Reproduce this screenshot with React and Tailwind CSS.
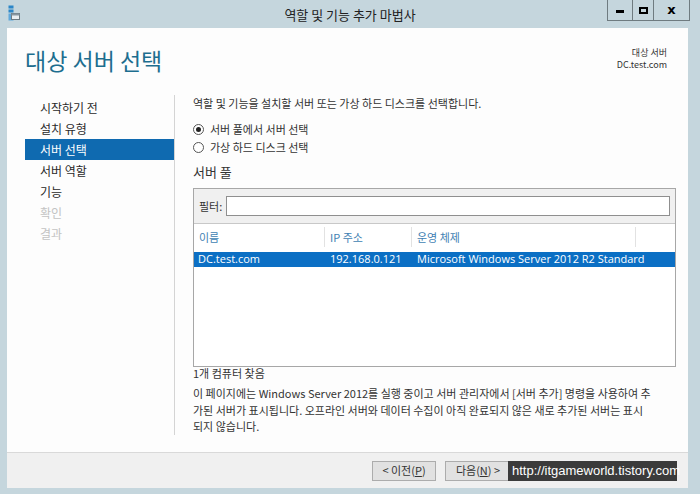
import { useState } from "react";

const font = { fontFamily: '"Noto Sans CJK KR", "Noto Sans", sans-serif' };

const steps = [
  { label: "시작하기 전", state: "done" },
  { label: "설치 유형", state: "done" },
  { label: "서버 선택", state: "active" },
  { label: "서버 역할", state: "done" },
  { label: "기능", state: "done" },
  { label: "확인", state: "disabled" },
  { label: "결과", state: "disabled" },
];

function AppIcon() {
  return (
    <svg width="12" height="16" viewBox="0 0 12 16">
      <rect x="0.5" y="0.5" width="5" height="3" fill="#2b86c8" />
      <rect x="0.5" y="4.5" width="5" height="3" fill="#2b86c8" />
      <rect x="0.5" y="8.5" width="5" height="7" fill="#5fa8dc" />
      <rect x="3.5" y="8.5" width="8" height="6" fill="#e9eef1" stroke="#6b7a82" />
      <rect x="3.5" y="8.5" width="8" height="2" fill="#8796a0" />
    </svg>
  );
}

function Radio({ checked, label }) {
  return (
    <div className="flex items-center h-[18px]">
      <span className="w-[11px] h-[11px] rounded-full border border-[#555] bg-white flex items-center justify-center mr-[6px]">
        {checked && <span className="w-[5px] h-[5px] rounded-full bg-[#222]" />}
      </span>
      <span>{label}</span>
    </div>
  );
}

export default function App() {
  const [selected] = useState(0);

  return (
    <div className="w-[700px] h-[494px] bg-[#c5d6dd] flex flex-col text-[12px] text-[#1e1e1e]" style={font}>
      {/* title bar */}
      <div className="h-[28px] flex items-start relative">
        <div className="pl-[8px] pt-[5px]">
          <AppIcon />
        </div>
        <div className="absolute left-0 right-0 top-[5px] text-center text-[13px] text-[#222]">
          역할 및 기능 추가 마법사
        </div>
        <div className="ml-auto mr-[10px] flex h-[21px] border border-t-0 border-[#6f7b80]">
          <div className="w-[25px] flex items-center justify-center border-r border-[#6f7b80]">
            <span className="w-[8px] h-[3px] bg-black mt-[3px]" />
          </div>
          <div className="w-[21px] flex items-center justify-center border-r border-[#6f7b80]">
            <span className="w-[9px] h-[7px] border-2 border-black" />
          </div>
          <div className="w-[35px] flex items-center justify-center text-[13px] font-bold text-black" style={{ fontFamily: '"DejaVu Sans", sans-serif' }}>
            x
          </div>
        </div>
      </div>

      {/* body */}
      <div className="flex-1 flex flex-col ml-[7px] mr-[12px] mb-[6px]">
        <div className="flex-1 bg-[#fdfdfd] flex flex-col pl-[18px] pr-[12px] pt-[15px]">
          <div className="flex justify-between h-[52px]">
            <div className="text-[23px] leading-[34px] text-[#1d6e8f]">대상 서버 선택</div>
            <div className="text-right text-[9px] leading-[12px] pt-[4px] pr-[9px] text-[#333]">
              <div>대상 서버</div>
              <div>DC.test.com</div>
            </div>
          </div>

          <div className="flex flex-1 pb-[17px]">
            {/* nav */}
            <div className="w-[150px] pt-[2px] border-r border-[#d4d4d4]">
              {steps.map((s) => (
                <div
                  key={s.label}
                  className={
                    "h-[21px] leading-[21px] pl-[15px] text-[12px] " +
                    (s.state === "active"
                      ? "bg-[#0f6ab0] text-white"
                      : s.state === "disabled"
                      ? "text-[#c3c3c3]"
                      : "text-[#2a2a2a]")
                  }
                >
                  {s.label}
                </div>
              ))}
            </div>

            {/* main */}
            <div className="flex-1 pl-[18px]">
              <div className="leading-[16px] text-[11px] text-[#333]">
                역할 및 기능을 설치할 서버 또는 가상 하드 디스크를 선택합니다.
              </div>
              <div className="mt-[9px] text-[11px] text-[#333]">
                <Radio checked label="서버 풀에서 서버 선택" />
                <Radio label="가상 하드 디스크 선택" />
              </div>
              <div className="mt-[7px] text-[13px] leading-[18px] text-[#333]">서버 풀</div>

              <div className="mt-[7px] h-[179px] border border-[#a7a7a7] flex flex-col bg-white">
                <div className="h-[35px] bg-[#f0f0f0] border-b border-[#c8c8c8] flex items-center pl-[5px] pr-[5px]">
                  <span className="text-[11px] mr-[4px] text-[#333]">필터:</span>
                  <div className="flex-1 h-[20px] border border-[#8f8f8f] bg-white" />
                </div>
                <div className="h-[25px] flex items-center text-[11px] text-[#3f7fb3]">
                  <div className="w-[131px] pl-[5px] h-[20px] leading-[20px] border-r border-[#e2e2e2]">이름</div>
                  <div className="w-[87px] pl-[5px] h-[20px] leading-[20px] border-r border-[#e2e2e2]">IP 주소</div>
                  <div className="w-[224px] pl-[5px] h-[20px] leading-[20px] border-r border-[#e2e2e2]">운영 체제</div>
                </div>
                <div
                  className={
                    "mt-[3px] h-[15px] flex items-center text-[11px] " +
                    (selected === 0 ? "bg-[#0b6fc4] text-white" : "")
                  }
                  style={{ fontFamily: '"Open Sans", "Noto Sans", sans-serif' }}
                >
                  <div className="w-[131px] pl-[4px]">DC.test.com</div>
                  <div className="w-[87px] pl-[5px]">192.168.0.121</div>
                  <div className="pl-[5px] whitespace-nowrap">Microsoft Windows Server 2012 R2 Standard</div>
                </div>
              </div>

              <div className="mt-[-1px] text-[11px] leading-[14px] text-[#333]">1개 컴퓨터 찾음</div>
              <div className="mt-[5px] text-[11px] leading-[16.5px] text-[#333] whitespace-nowrap">
                이 페이지에는 Windows Server 2012를 실행 중이고 서버 관리자에서 [서버 추가] 명령을 사용하여 추
                <br />
                가된 서버가 표시됩니다. 오프라인 서버와 데이터 수집이 아직 완료되지 않은 새로 추가된 서버는 표시
                <br />
                되지 않습니다.
              </div>
            </div>
          </div>
        </div>

        {/* footer */}
        <div className="h-[36px] bg-[#f0f0f0] border-t border-[#d9d9d9] flex items-center pl-[365px]">
          <button className="w-[64px] h-[20px] bg-[#e1e1e1] border border-[#acacac] text-[11px] text-[#333]">
            &lt; 이전(<u>P</u>)
          </button>
          <button className="ml-[9px] w-[66px] h-[20px] bg-[#e1e1e1] border border-[#acacac] text-[11px] text-[#333]">
            다음(<u>N</u>) &gt;
          </button>
          <div
            className="ml-[-3px] w-[169px] h-[20px] bg-[#3b3b3b] text-white text-[13px] leading-[20px] pl-[4px] whitespace-nowrap"
            style={{ fontFamily: '"Liberation Sans", Arial, sans-serif' }}
          >
            http://itgameworld.tistory.com
          </div>
        </div>
      </div>
    </div>
  );
}
